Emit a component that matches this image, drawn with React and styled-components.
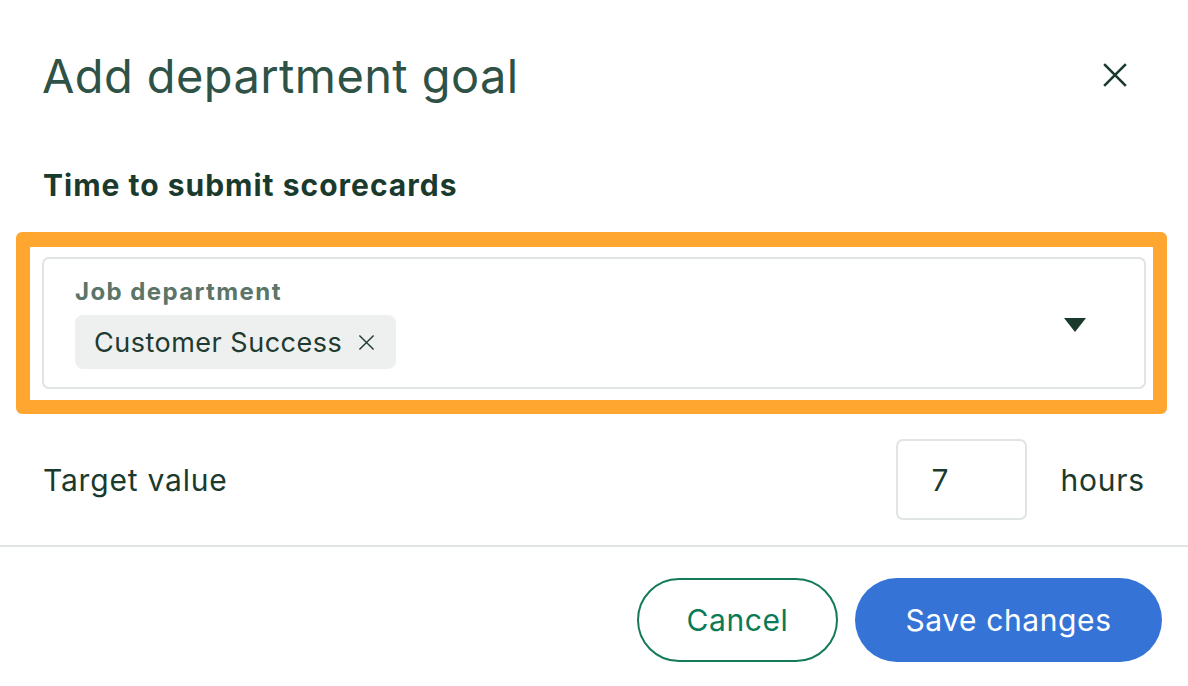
import React from "react";
import styled, { createGlobalStyle } from "styled-components";

const GlobalStyle = createGlobalStyle`
  html, body {
    margin: 0;
    padding: 0;
    background: #ffffff;
  }
  body {
    font-family: Inter, "Liberation Sans", sans-serif;
    -webkit-font-smoothing: antialiased;
  }
`;

const Modal = styled.div`
  width: 1188px;
  height: 686px;
  background: #ffffff;
  display: flex;
  flex-direction: column;
  overflow: hidden;
`;

const Header = styled.header`
  height: 150px;
  padding: 0 59px 0 42px;
  display: flex;
  align-items: center;
  justify-content: space-between;
  box-sizing: border-box;
`;

const Title = styled.h1`
  margin: 0;
  font-size: 47px;
  font-weight: 400;
  color: #2f5247;
  letter-spacing: 0.4px;
`;

const CloseButton = styled.button`
  border: none;
  background: none;
  padding: 0;
  width: 28px;
  height: 28px;
  display: flex;
  align-items: center;
  justify-content: center;
  color: #1a3a2e;
  cursor: pointer;
`;

const Body = styled.div`
  display: flex;
  flex-direction: column;
`;

const SectionTitle = styled.h2`
  margin: 0 0 12px;
  padding: 0 43px;
  height: 70px;
  line-height: 70px;
  font-size: 30px;
  font-weight: 700;
  letter-spacing: 1px;
  color: #1a3a2e;
`;

const Highlight = styled.div`
  margin: 0 21px 0 16px;
  border: 14px solid #ffa630;
  border-top-width: 15px;
  border-radius: 6px;
  padding: 10px 7px 11px 12px;
`;

const SelectBox = styled.div`
  height: 132px;
  box-sizing: border-box;
  border: 2px solid #e0e4e2;
  border-radius: 7px;
  padding: 19px 58px 0 31px;
  display: flex;
  justify-content: space-between;
  align-items: flex-start;
`;

const SelectContent = styled.div`
  display: flex;
  flex-direction: column;
  gap: 9px;
`;

const Label = styled.div`
  font-size: 24px;
  font-weight: 700;
  letter-spacing: 1.4px;
  color: #5b7569;
  line-height: 28px;
`;

const Chip = styled.div`
  display: inline-flex;
  align-items: center;
  gap: 16px;
  height: 54px;
  padding: 0 21px 0 19px;
  background: #edf0ef;
  border-radius: 8px;
  font-size: 27px;
  letter-spacing: 0.5px;
  color: #1f3a30;
  align-self: flex-start;
`;

const Caret = styled.div`
  margin-top: 40px;
  width: 0;
  height: 0;
  border-left: 11px solid transparent;
  border-right: 11px solid transparent;
  border-top: 14px solid #1a3a2e;
`;

const TargetRow = styled.div`
  display: flex;
  align-items: center;
  padding: 25px 43px 0 43px;
  height: 81px;
  font-size: 30px;
  letter-spacing: 0.8px;
  color: #1a3a2e;
`;

const TargetLabel = styled.span`
  flex: 1;
`;

const NumberBox = styled.div`
  width: 131px;
  height: 81px;
  box-sizing: border-box;
  border: 2px solid #e0e4e2;
  border-radius: 7px;
  display: flex;
  align-items: center;
  padding-left: 33px;
  margin-right: 33px;
`;

const Divider = styled.hr`
  margin: 25px 0 0;
  border: none;
  border-top: 2px solid #e0e4e2;
`;

const Footer = styled.footer`
  display: flex;
  justify-content: flex-end;
  gap: 17px;
  padding: 31px 26px 0 0;
`;

const Button = styled.button`
  height: 84px;
  border-radius: 42px;
  font-family: Inter, "Liberation Sans", sans-serif;
  font-size: 30px;
  letter-spacing: 0.6px;
  font-weight: 400;
  box-sizing: border-box;
  cursor: pointer;
  padding: 0;
  width: ${(p) => p.$width}px;
  border: ${(p) => (p.$primary ? "none" : "2px solid #147a57")};
  background: ${(p) => (p.$primary ? "#3574d6" : "#ffffff")};
  color: ${(p) => (p.$primary ? "#ffffff" : "#0b7a56")};
`;

const XIcon = ({ size, stroke }) => (
  <svg width={size} height={size} viewBox="0 0 24 24" fill="none">
    <path
      d="M2 2 L22 22 M22 2 L2 22"
      stroke="currentColor"
      strokeWidth={stroke}
      strokeLinecap="butt"
    />
  </svg>
);

const App = () => {
  return (
    <>
      <GlobalStyle />
      <Modal>
        <Header>
          <Title>Add department goal</Title>
          <CloseButton aria-label="Close">
            <XIcon size={26} stroke={2.4} />
          </CloseButton>
        </Header>
        <Body>
          <SectionTitle>Time to submit scorecards</SectionTitle>
          <Highlight>
            <SelectBox>
              <SelectContent>
                <Label>Job department</Label>
                <Chip>
                  Customer Success
                  <XIcon size={17} stroke={2} />
                </Chip>
              </SelectContent>
              <Caret />
            </SelectBox>
          </Highlight>
          <TargetRow>
            <TargetLabel>Target value</TargetLabel>
            <NumberBox>7</NumberBox>
            <span>hours</span>
          </TargetRow>
          <Divider />
          <Footer>
            <Button $width={201}>Cancel</Button>
            <Button $primary $width={307}>
              Save changes
            </Button>
          </Footer>
        </Body>
      </Modal>
    </>
  );
};

export default App;
